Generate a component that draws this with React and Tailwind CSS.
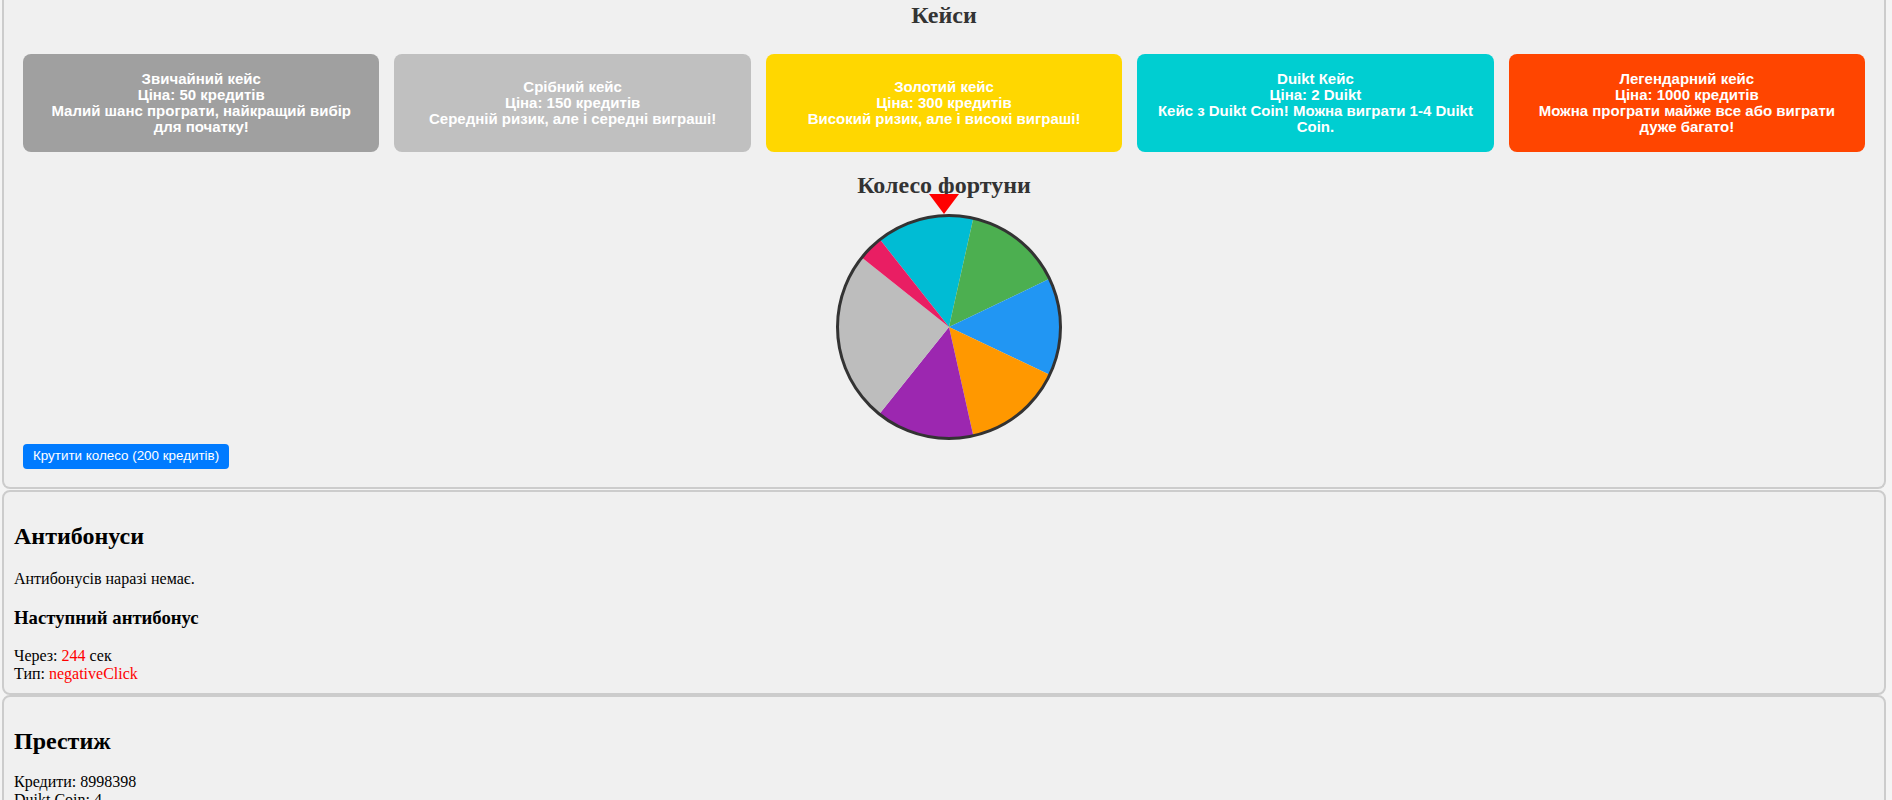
import { useState } from "react";

const cases = [
  { name: "Звичайний кейс", price: "Ціна: 50 кредитів", note: "Малий шанс програти, найкращий вибір для початку!", color: "bg-[#a0a0a0]" },
  { name: "Срібний кейс", price: "Ціна: 150 кредитів", note: "Середній ризик, але і середні виграші!", color: "bg-[#c0c0c0]" },
  { name: "Золотий кейс", price: "Ціна: 300 кредитів", note: "Високий ризик, але і високі виграші!", color: "bg-[#ffd700]" },
  { name: "Duikt Кейс", price: "Ціна: 2 Duikt", note: "Кейс з Duikt Coin! Можна виграти 1-4 Duikt Coin.", color: "bg-[#00ced1]" },
  { name: "Легендарний кейс", price: "Ціна: 1000 кредитів", note: "Можна програти майже все або виграти дуже багато!", color: "bg-[#ff4500]" },
];

const slices = [
  { from: -38.3, to: 12.6, fill: "#00BCD4" },
  { from: 12.6, to: 64.4, fill: "#4CAF50" },
  { from: 64.4, to: 115.4, fill: "#2196F3" },
  { from: 115.4, to: 167.4, fill: "#FF9800" },
  { from: 167.4, to: 218.7, fill: "#9C27B0" },
  { from: 218.7, to: 308.6, fill: "#BDBDBD" },
  { from: 308.6, to: 321.7, fill: "#E91E63" },
];

function point(angle, r) {
  const rad = (angle * Math.PI) / 180;
  return [113 + r * Math.sin(rad), 113 - r * Math.cos(rad)];
}

function slicePath({ from, to }) {
  const [x1, y1] = point(from, 112);
  const [x2, y2] = point(to, 112);
  const large = to - from > 180 ? 1 : 0;
  return `M113 113 L${x1} ${y1} A112 112 0 ${large} 1 ${x2} ${y2} Z`;
}

function Wheel() {
  return (
    <svg width="226" height="226" viewBox="0 0 226 226">
      {slices.map((s) => (
        <path key={s.fill} d={slicePath(s)} fill={s.fill} />
      ))}
      <circle cx="113" cy="113" r="111.5" fill="none" stroke="#333" strokeWidth="3" />
    </svg>
  );
}

function App() {
  const [spinning, setSpinning] = useState(false);

  return (
    <div className="min-h-[800px] bg-[#f4f4f4] font-['Liberation_Serif',serif] text-black">
      <div className="ml-[2px] w-[1884px] rounded-b-lg border-x-2 border-b-2 border-[#cccccc] bg-[#f0f0f0] px-[19px] pb-[18px] pt-[1px]">
        <h2 className="text-center text-[24px] font-bold leading-[28px] text-[#333]">Кейси</h2>
        <div className="mt-[25px] flex gap-[15px]">
          {cases.map((c) => (
            <div
              key={c.name}
              className={`flex h-[98px] flex-1 cursor-pointer flex-col items-center justify-center rounded-lg px-[15px] text-center font-['Liberation_Sans',Arial,sans-serif] text-[15px] font-bold leading-[16px] text-white ${c.color}`}
            >
              <div>{c.name}</div>
              <div>{c.price}</div>
              <div>{c.note}</div>
            </div>
          ))}
        </div>
        <h2 className="mt-[19px] text-center text-[24px] font-bold leading-[28px] text-[#333]">Колесо фортуни</h2>
        <div className="relative mt-[15px] flex justify-center">
          <div className="absolute left-[calc(50%-15px)] top-[-20px] z-10 h-0 w-0 border-x-[15px] border-t-[20px] border-x-transparent border-t-[#ff0000]" />
          <div className={`translate-x-[5px] ${spinning ? "opacity-95" : ""}`}>
            <Wheel />
          </div>
        </div>
        <button
          className="mt-[4px] h-[25px] rounded-[4px] bg-[#007bff] px-[10px] font-['Liberation_Sans',Arial,sans-serif] text-[13.4px] text-white"
          onClick={() => setSpinning((v) => !v)}
        >
          Крутити колесо (200 кредитів)
        </button>
      </div>

      <div className="ml-[2px] mt-[1px] w-[1884px] rounded-lg border-2 border-[#cccccc] bg-[#f0f0f0] px-[10px] py-[10px] text-[16px]">
        <h2 className="mt-[20px] text-[24px] font-bold leading-[28px]">Антибонуси</h2>
        <p className="mt-[20px] leading-[18px]">Антибонусів наразі немає.</p>
        <h3 className="mt-[19px] text-[18.72px] font-bold leading-[22px]">Наступний антибонус</h3>
        <div className="mt-[18px] leading-[18px]">
          <div>
            Через: <span className="text-[#ff0000]">244</span> сек
          </div>
          <div>
            Тип: <span className="text-[#ff0000]">negativeClick</span>
          </div>
        </div>
      </div>

      <div className="ml-[2px] w-[1884px] rounded-lg border-2 border-[#cccccc] bg-[#f0f0f0] px-[10px] py-[10px] text-[16px]">
        <h2 className="mt-[20px] text-[24px] font-bold leading-[28px]">Престиж</h2>
        <div className="mt-[18px] leading-[18px]">
          <div>Кредити: 8998398</div>
          <div>Duikt Coin: 4</div>
        </div>
      </div>
    </div>
  );
}

export default App;
